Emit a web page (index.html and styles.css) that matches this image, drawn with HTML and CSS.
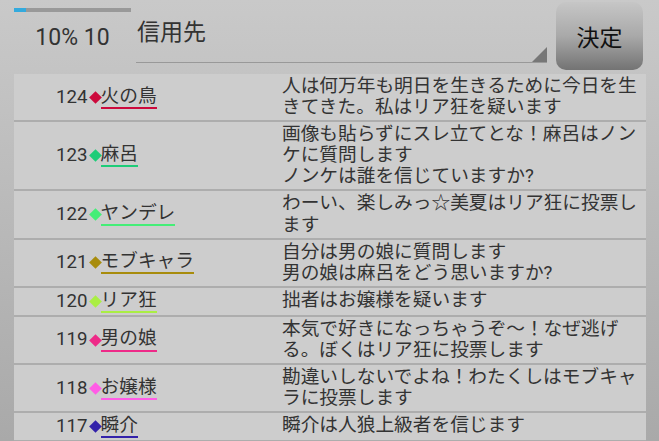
FILE: index.html
```html
<!DOCTYPE html>
<html lang="ja">
<head>
    <meta charset="UTF-8">
    <meta name="viewport" content="width=device-width, initial-scale=1.0">
    <title>信用先</title>
    <link rel="stylesheet" href="styles.css">
</head>
<body>
    <div class="top">
        <div class="progress-box">
            <div class="bar"><div class="bar-fill" style="width: 10%"></div></div>
            <div class="count">10% 10</div>
        </div>
        <div class="spinner">
            <span class="spinner-text">信用先</span>
            <span class="spinner-arrow"></span>
        </div>
        <button class="decide">決定</button>
    </div>

    <div class="log">
        <div class="row">
            <div class="who"><span class="no">124</span><span class="mark red"></span><span class="name red">火の鳥</span></div>
            <div class="msg">人は何万年も明日を生きるために今日を生きてきた。私はリア狂を疑います</div>
        </div>
        <div class="row">
            <div class="who"><span class="no">123</span><span class="mark green"></span><span class="name green">麻呂</span></div>
            <div class="msg">画像も貼らずにスレ立てとな！麻呂はノンケに質問します<br>ノンケは誰を信じていますか?</div>
        </div>
        <div class="row">
            <div class="who"><span class="no">122</span><span class="mark light-green"></span><span class="name light-green">ヤンデレ</span></div>
            <div class="msg">わーい、楽しみっ☆美夏はリア狂に投票します</div>
        </div>
        <div class="row">
            <div class="who"><span class="no">121</span><span class="mark olive"></span><span class="name olive">モブキャラ</span></div>
            <div class="msg">自分は男の娘に質問します<br>男の娘は麻呂をどう思いますか?</div>
        </div>
        <div class="row">
            <div class="who"><span class="no">120</span><span class="mark lime"></span><span class="name lime">リア狂</span></div>
            <div class="msg">拙者はお嬢様を疑います</div>
        </div>
        <div class="row">
            <div class="who"><span class="no">119</span><span class="mark pink"></span><span class="name pink">男の娘</span></div>
            <div class="msg">本気で好きになっちゃうぞ～！なぜ逃げる。ぼくはリア狂に投票します</div>
        </div>
        <div class="row">
            <div class="who"><span class="no">118</span><span class="mark magenta"></span><span class="name magenta">お嬢様</span></div>
            <div class="msg">勘違いしないでよね！わたくしはモブキャラに投票します</div>
        </div>
        <div class="row">
            <div class="who"><span class="no">117</span><span class="mark blue"></span><span class="name blue">瞬介</span></div>
            <div class="msg">瞬介は人狼上級者を信じます</div>
        </div>
    </div>
</body>
</html>
```

FILE: styles.css
```css
html, body {
    margin: 0;
    height: 441px;
    overflow: hidden;
}
body {
    display: flex;
    flex-direction: column;
    font-family: Roboto, "Noto Sans CJK JP", sans-serif;
    color: #333;
    background: linear-gradient(#c9c9c9, #a9a9a9);
}
.top {
    display: flex;
    flex: none;
    height: 74px;
}
.progress-box {
    width: 117px;
    margin-left: 14px;
    padding-top: 8px;
}
.bar {
    height: 4px;
    background-color: #999;
}
.bar-fill {
    height: 100%;
    background-color: #33aadd;
}
.count {
    margin-top: 12px;
    font-size: 23px;
    line-height: 28px;
    text-align: center;
    color: #333;
}
.spinner {
    display: flex;
    justify-content: space-between;
    width: 411px;
    height: 62px;
    margin-left: 5px;
    border-bottom: 1px solid #999;
}
.spinner-text {
    padding-top: 18px;
    padding-left: 1px;
    font-size: 23px;
    line-height: 30px;
    color: #333;
}
.spinner-arrow {
    align-self: flex-end;
    width: 0;
    height: 0;
    border-left: 15px solid transparent;
    border-bottom: 15px solid #777;
}
.decide {
    width: 87px;
    height: 68px;
    margin: 2px 0 0 9px;
    padding: 0;
    border: none;
    border-radius: 10px;
    background: linear-gradient(#c6c6c6, #a9a9a9 50%, #737373);
    font-family: Roboto, "Noto Sans CJK JP", sans-serif;
    font-size: 23px;
    color: #111;
}
.log {
    flex: 1;
    margin: 0 13px 0 14px;
    background-color: #cdcdcd;
}
.row {
    display: grid;
    grid-template-columns: 268px 1fr;
    padding: 2px 0;
    border-bottom: 2px solid #adadad;
    font-size: 18.7px;
    line-height: 21.1px;
}
.who {
    display: flex;
    align-items: center;
    padding-left: 42px;
}
.mark {
    display: inline-block;
    width: 9px;
    height: 9px;
    margin: 0 1px 0 3px;
    transform: rotate(45deg);
    background-color: currentColor;
}
.name {
    display: inline-block;
    border-bottom: 2px solid currentColor;
}
.name::first-line {
    color: #333;
}
.msg {
    padding-right: 2px;
}
.red { color: #cc0a3c; }
.green { color: #1ecc78; }
.light-green { color: #44ee77; }
.olive { color: #a88c0c; }
.lime { color: #aaee44; }
.pink { color: #ee2a88; }
.magenta { color: #ff5ce6; }
.blue { color: #3322aa; }
```
